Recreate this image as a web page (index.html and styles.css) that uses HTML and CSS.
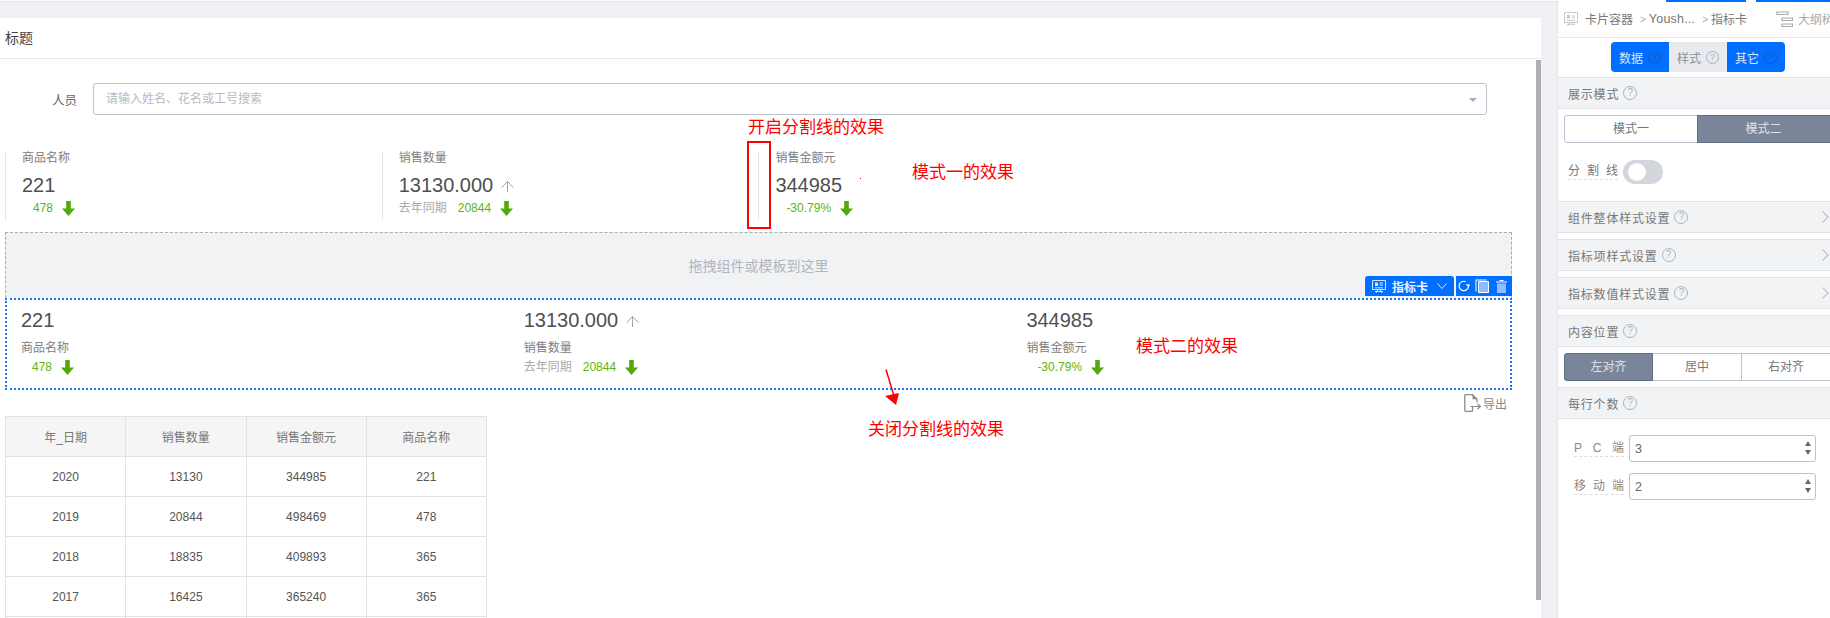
FILE: index.html
```html
<!DOCTYPE html>
<html lang="zh-CN">
<head>
<meta charset="utf-8">
<title>指标卡</title>
<link rel="stylesheet" href="styles.css">
</head>
<body>
<svg class="defs" width="0" height="0" aria-hidden="true">
  <symbol id="down" viewBox="0 0 13 15"><path d="M4.2 0H8.8V7.6H13L6.5 15 0 7.6H4.2Z" fill="#55a80a"/></symbol>
  <symbol id="up" viewBox="0 0 13 11"><path d="M6.5 .5V11M6.5 .5 .7 6.5M6.5 .5 12.3 6.5" fill="none" stroke="#a3a3a3"/></symbol>
</svg>
<main class="main">
  <section class="card">
    <header class="card-title">标题</header>
    <div class="filter">
      <span class="filter-label">人员</span>
      <div class="filter-input"><span>请输入姓名、花名或工号搜索</span><i class="caret"></i></div>
    </div>
    <div class="mode-one">
      <div class="item">
        <div class="label">商品名称</div>
        <div class="value">221</div>
        <div class="sub"><b class="num">478</b><svg class="down"><use href="#down"/></svg></div>
      </div>
      <div class="item">
        <div class="label">销售数量</div>
        <div class="value">13130.000<svg class="up"><use href="#up"/></svg></div>
        <div class="sub"><span class="sub-name">去年同期</span><b class="num">20844</b><svg class="down"><use href="#down"/></svg></div>
      </div>
      <div class="item">
        <div class="label">销售金额元</div>
        <div class="value">344985</div>
        <div class="sub"><b class="num">-30.79%</b><svg class="down"><use href="#down"/></svg></div>
      </div>
    </div>
    <div class="dropzone">拖拽组件或模板到这里</div>
    <div class="mode-two">
      <div class="toolbar">
        <div class="tool-name">
          <svg class="tool-board" viewBox="0 0 14 15"><path d="M.5 1.5H13.5V10.5H.5ZM4 14 6 10.5M10 14 8 10.5M3 12.5H11" fill="none" stroke="#d5e5ff"/><path d="M3 3.5H6V7H3Z" fill="#d5e5ff"/><path d="M7.5 4H11M7.5 6H11M3 8.8H11" stroke="#d5e5ff"/></svg>
          <span>指标卡</span>
          <svg class="tool-chevron" viewBox="0 0 10 6"><path d="M.5 .5 5 5.5 9.500 .5" fill="none" stroke="#d5e5ff"/></svg>
        </div>
        <div class="tool-actions">
          <svg class="tool-refresh" viewBox="0 0 12 12"><path d="M10.500 6A4.700 4.700 0 1 1 7.500 1.600" fill="none" stroke="#fff" stroke-width="1.200"/><path d="M7.800 4 12 4.500 10.500 7.500Z" fill="#fff"/></svg>
          <svg class="tool-copy" viewBox="0 0 14 14"><path d="M.5 .5H11.500V1.500H1.500V12.500H.5Z" fill="#fff"/><path d="M3.500 2.500H13.500V13.500H3.500Z" fill="#8fbcff" stroke="#fff"/></svg>
          <svg class="tool-trash" viewBox="0 0 11 13"><path d="M3.500 .5H7.500M0 2H11" stroke="#fff"/><path d="M1 3.500H10V13H1Z" fill="#8fbcff"/></svg>
        </div>
      </div>
      <div class="item2">
        <div class="value">221</div>
        <div class="label">商品名称</div>
        <div class="sub"><b class="num">478</b><svg class="down"><use href="#down"/></svg></div>
      </div>
      <div class="item2">
        <div class="value">13130.000<svg class="up"><use href="#up"/></svg></div>
        <div class="label">销售数量</div>
        <div class="sub"><span class="sub-name">去年同期</span><b class="num">20844</b><svg class="down"><use href="#down"/></svg></div>
      </div>
      <div class="item2">
        <div class="value">344985</div>
        <div class="label">销售金额元</div>
        <div class="sub"><b class="num">-30.79%</b><svg class="down"><use href="#down"/></svg></div>
      </div>
    </div>
    <div class="export">
      <svg class="export-icon" viewBox="0 0 18 18"><path d="M8.500 12.500V16.800A.7.7 0 0 1 8 17.300H1.800A1 1 0 0 1 .8 16.300V1.700A1 1 0 0 1 1.800 .7H8.500L13 5.200V8.500" fill="none" stroke="#8a8a8a" stroke-width="1.300"/><path d="M8.500 .7V5.200H13Z" fill="#8a8a8a"/><path d="M6.500 12.500H16M13.500 10 16.500 12.500 13.500 15" fill="none" stroke="#8a8a8a" stroke-width="1.200"/></svg>
      <span>导出</span>
    </div>
    <table class="table">
      <thead>
        <tr><th>年_日期</th><th>销售数量</th><th>销售金额元</th><th>商品名称</th></tr>
      </thead>
      <tbody>
        <tr><td>2020</td><td>13130</td><td>344985</td><td>221</td></tr>
        <tr><td>2019</td><td>20844</td><td>498469</td><td>478</td></tr>
        <tr><td>2018</td><td>18835</td><td>409893</td><td>365</td></tr>
        <tr><td>2017</td><td>16425</td><td>365240</td><td>365</td></tr>
        <tr><td></td><td></td><td></td><td></td></tr>
      </tbody>
    </table>
    <div class="scrollbar"></div>
  </section>

  <div class="note note-open">开启分割线的效果</div>
  <div class="note-box"></div>
  <i class="note-dot"></i>
  <div class="note note-one">模式一的效果</div>
  <div class="note note-two">模式二的效果</div>
  <svg class="note-arrow" viewBox="0 0 20 40"><path d="M2 .5 10 27" stroke="#f00" stroke-width="1.500" fill="none"/><path d="M1 27 15 24 12 36Z" fill="#f00"/></svg>
  <div class="note note-close">关闭分割线的效果</div>
</main>

<aside class="side">
  <div class="top-tabs"><i class="top-a"></i><i class="top-b"></i></div>
  <nav class="crumbs">
    <svg class="crumb-icon" viewBox="0 0 14 14"><path d="M.5 .5H13.500V10.500H.5ZM4 13.500 6 10.500M10 13.500 8 10.500M3 12.300H11" fill="none" stroke="#c5c9d0"/><path d="M3 3H6V6.500H3ZM7.500 3.500H11V4.500H7.500ZM7.500 5.500H11V6.500H7.500ZM3 8H11V9H3Z" fill="#c5c9d0"/></svg>
    <span class="crumb crumb-first">卡片容器</span><span class="crumb-sep">&gt;</span>
    <span class="crumb crumb-mid">Yoush...</span><span class="crumb-sep">&gt;</span>
    <span class="crumb">指标卡</span>
    <svg class="outline-icon" viewBox="0 0 17 16"><path d="M1 1H12V3.500H1ZM6 7H16.500V9.500H6ZM6 13H16.500V15.500H6Z" fill="none" stroke="#aaa" stroke-width="1.200"/></svg>
    <span class="outline-text">大纲树</span>
  </nav>
  <div class="tabs">
    <div class="tab tab-on">数据<i class="help">?</i></div>
    <div class="tab tab-off">样式<i class="help">?</i></div>
    <div class="tab tab-on">其它<i class="help">?</i></div>
  </div>
  <div class="bar bar-first">展示模式<i class="help">?</i></div>
  <div class="seg seg-two">
    <div class="seg-item">模式一</div>
    <div class="seg-item seg-on">模式二</div>
  </div>
  <div class="switch-row">
    <span class="field-label">分割线</span>
    <span class="switch"><i></i></span>
  </div>
  <div class="bar bar-fold">组件整体样式设置<i class="help">?</i><i class="chevron"></i></div>
  <div class="bar bar-fold">指标项样式设置<i class="help">?</i><i class="chevron"></i></div>
  <div class="bar bar-fold">指标数值样式设置<i class="help">?</i><i class="chevron"></i></div>
  <div class="bar">内容位置<i class="help">?</i></div>
  <div class="seg seg-three">
    <div class="seg-item seg-on">左对齐</div>
    <div class="seg-item">居中</div>
    <div class="seg-item">右对齐</div>
  </div>
  <div class="bar bar-count">每行个数<i class="help">?</i></div>
  <div class="form">
    <div class="form-row">
      <span class="field-label field-wide"><span>P</span><span>C</span><span>端</span></span>
      <div class="number">3<span class="spin"><i class="spin-up"></i><i class="spin-down"></i></span></div>
    </div>
    <div class="form-row">
      <span class="field-label field-wide"><span>移</span><span>动</span><span>端</span></span>
      <div class="number">2<span class="spin"><i class="spin-up"></i><i class="spin-down"></i></span></div>
    </div>
  </div>
</aside>
</body>
</html>
```
FILE: styles.css
```css
* { box-sizing: border-box; }
html, body { margin: 0; height: 618px; overflow: hidden; }
body {
  display: flex;
  font-family: "Liberation Sans", "Noto Sans CJK SC", sans-serif;
  font-size: 12px;
  color: #555;
  background: #fff;
}
i { font-style: normal; }
b { font-weight: normal; }
.defs { position: absolute; }

/* left canvas */
.main {
  position: relative;
  width: 1558px;
  flex: none;
  height: 618px;
  padding-top: 18px;
  background: #f0f1f4;
  border-top: 1px solid #fff;
  box-shadow: inset 0 1px 0 #e3e5e9;
  border-right: 1px solid #e4e6ea;
}
.card {
  position: relative;
  width: 1541px;
  height: 600px;
  margin-top: -1px;
  background: #fff;
  overflow: hidden;
}
.card-title {
  height: 41px;
  padding-left: 5px;
  font-size: 14px;
  line-height: 40px;
  color: #444;
  border-bottom: 1px solid #e8e9ec;
}
.filter {
  display: flex;
  align-items: center;
  margin-top: 24px;
  padding-left: 52px;
}
.filter-label { width: 25px; margin-right: 16px; font-size: 12.500px; color: #666; }
.filter-input {
  position: relative;
  width: 1394px;
  height: 32px;
  padding-left: 12px;
  line-height: 30px;
  color: #b5bac4;
  border: 1px solid #bcc3cf;
  border-radius: 3px;
}
.caret {
  position: absolute;
  right: 9px;
  top: 14px;
  border: 4px solid transparent;
  border-top: 4px solid #a8adb8;
  border-bottom: 0;
}

/* indicators */
.mode-one {
  display: grid;
  grid-template-columns: repeat(3, 376.700px);
  margin: 36px 0 0 5px;
}
.item {
  height: 69px;
  padding-left: 16px;
  border-left: 1px solid #e3e4e7;
}
.label { height: 14px; line-height: 14px; color: #808080; }
.value {
  display: flex;
  align-items: center;
  height: 24px;
  font-size: 20px;
  line-height: 24px;
  color: #505050;
}
.item .value { margin-top: 8px; }
.sub {
  display: flex;
  align-items: center;
  height: 16px;
  line-height: 16px;
}
.item .sub { margin-top: 3px; }
.sub-name { color: #aaa; }
.num { margin-left: 11px; margin-right: 9px; color: #5fb30c; }
.down { width: 13px; height: 15px; }
.up { width: 13px; height: 11px; margin-left: 8px; margin-top: 3px; }

.dropzone {
  width: 1507px;
  height: 66px;
  margin: 12px 0 0 5px;
  font-size: 14px;
  line-height: 66px;
  text-align: center;
  color: #b0b5bf;
  background: #f1f2f4;
  border: 1px dashed #a9adb8;
  border-bottom: 0;
}
.mode-two {
  position: relative;
  display: grid;
  grid-template-columns: 502.700px 502.700px 1fr;
  width: 1507px;
  height: 92px;
  margin-left: 5px;
  padding: 8px 0 0 14px;
  border: 2px dotted #1a73f5;
}
.item2 .label { margin-top: 9px; }
.item2 .sub { margin-top: 4px; }

.toolbar {
  position: absolute;
  right: -2px;
  top: -24px;
  display: flex;
  gap: 2px;
  height: 20px;
  color: #fff;
}
.tool-name, .tool-actions {
  display: flex;
  align-items: center;
  background: #006eff;
}
.tool-name { width: 89px; padding-left: 7px; border-radius: 3px 3px 0 0; }
.tool-name span { margin-left: 6px; font-weight: bold; color: #eaf2ff; }
.tool-actions { width: 56px; padding-left: 2px; }
.tool-board { width: 14px; height: 15px; }
.tool-chevron { width: 10px; height: 6px; margin-left: 9px; }
.tool-refresh { width: 12px; height: 12px; }
.tool-copy { width: 14px; height: 14px; margin-left: 5px; }
.tool-trash { width: 11px; height: 13px; margin-left: 7px; }

.export {
  display: flex;
  align-items: center;
  justify-content: flex-end;
  width: 1507px;
  height: 26px;
  color: #888;
}
.export-icon { width: 18px; height: 18px; margin-right: 1px; }

.table {
  width: 482px;
  margin-left: 5px;
  border-collapse: collapse;
  table-layout: fixed;
  color: #555;
}
.table th, .table td {
  height: 40px;
  padding: 0;
  text-align: center;
  border: 1px solid #e0e2e7;
  font-weight: normal;
}
.table th { color: #777; background: #f5f5f5; }

.scrollbar {
  position: absolute;
  right: 0;
  top: 42px;
  width: 5px;
  height: 540px;
  background: #b0b0b0;
}

/* red annotations */
.note {
  position: absolute;
  font-size: 17px;
  line-height: 20px;
  color: #f00;
  white-space: nowrap;
}
.note-open { left: 748px; top: 117px; }
.note-one { left: 912px; top: 162px; }
.note-two { left: 1136px; top: 336px; }
.note-close { left: 868px; top: 419px; }
.note-box {
  position: absolute;
  left: 747px;
  top: 140px;
  width: 24px;
  height: 88px;
  border: 2px solid #f00;
}
.note-dot {
  position: absolute;
  left: 860px;
  top: 177px;
  width: 1px;
  height: 1px;
  background: #f00;
}
.note-arrow {
  position: absolute;
  left: 884px;
  top: 368px;
  width: 20px;
  height: 40px;
}

/* right panel */
.side {
  flex: none;
  width: 272px;
  height: 618px;
  overflow: hidden;
  color: #777;
}
.top-tabs { position: relative; height: 0; }
.top-a, .top-b { position: absolute; top: 0; height: 2px; background: #006eff; }
.top-a { left: 108px; width: 80px; }
.top-b { left: 198px; width: 74px; }
.crumbs {
  display: flex;
  align-items: center;
  height: 38px;
  padding-left: 6px;
  border-bottom: 1px solid #e6e8eb;
  white-space: nowrap;
  overflow: hidden;
}
.crumb-icon { width: 14px; height: 14px; flex: none; }
.crumb-first { margin-left: 7px; }
.crumb-mid { letter-spacing: .2px; font-size: 12.500px; }
.crumb-sep { margin: 2px 3px 0 7px; font-size: 10px; color: #aaa; }
.outline-icon { width: 17px; height: 16px; margin-left: 29px; flex: none; }
.outline-text { margin-left: 5px; color: #aaa; }

.tabs {
  display: flex;
  width: 174px;
  height: 30px;
  margin: 4px 0 0 53px;
  border-radius: 4px;
  overflow: hidden;
}
.tab {
  display: flex;
  align-items: center;
  justify-content: center;
  gap: 5px;
  width: 58px;
}
.tab-on { color: #dce9ff; background: #006eff; }
.tab-off { color: #8a8f99; background: #e8eaed; }
.tab .help { width: 13px; height: 13px; margin: 0; font-size: 9px; line-height: 11px; }
.tab-on .help { color: #1f58ad; border-color: #1f58ad; }

.help {
  display: inline-block;
  width: 14px;
  height: 14px;
  margin-left: 4px;
  font-size: 10px;
  line-height: 12px;
  text-align: center;
  letter-spacing: 0;
  color: #a9b3c4;
  border: 1px solid #a9b3c4;
  border-radius: 50%;
}
.bar {
  display: flex;
  align-items: center;
  height: 32px;
  padding-left: 10px;
  letter-spacing: .8px;
  color: #777;
  background: #f2f3f5;
  border-top: 1px solid #e0e3e8;
  border-bottom: 1px solid #e0e3e8;
}
.bar-first { margin-top: 5px; }
.bar-fold { position: relative; margin-bottom: 6px; }
.chevron {
  position: absolute;
  right: 3px;
  top: 11px;
  width: 8px;
  height: 8px;
  border-top: 1px solid #b5b9c2;
  border-right: 1px solid #b5b9c2;
  transform: rotate(45deg);
}
.seg {
  display: grid;
  width: 272px;
  height: 28px;
  margin: 6px 0 6px 6px;
  line-height: 26px;
  text-align: center;
  border: 1px solid #bcc3cf;
  border-radius: 3px;
  color: #777;
}
.seg-two { grid-template-columns: 132px 133px 1fr; margin-bottom: 0; }
.seg-three { grid-template-columns: 88px 88px 89px 1fr; }
.seg-three .seg-item + .seg-item + .seg-item { border-left: 1px solid #bcc3cf; }
.seg-on {
  margin: -1px 0;
  height: 28px;
  color: #dfe3ea;
  background: #7a8599;
  border: 1px solid #626e84;
}
.seg-two .seg-on { margin-right: -8px; padding-right: 8px; }
.seg-three .seg-on { margin-left: -1px; border-radius: 3px 0 0 3px; }
.switch-row {
  display: flex;
  align-items: center;
  height: 58px;
  padding-left: 10px;
}
.field-label {
  width: 50px;
  line-height: 15px;
  letter-spacing: 7px;
  border-bottom: 1px dashed #ddd;
  white-space: nowrap;
}
.switch {
  width: 40px;
  height: 24px;
  margin-left: 5px;
  padding: 3px 5px;
  background: #d3d7dd;
  border-radius: 12px;
}
.switch i {
  display: block;
  width: 18px;
  height: 18px;
  background: #fff;
  border-radius: 50%;
}
.form { padding: 16px 14px 0 16px; }
.form-row {
  display: flex;
  align-items: center;
  gap: 5px;
  height: 27px;
  margin-bottom: 11px;
}
.field-wide {
  display: flex;
  justify-content: space-between;
  letter-spacing: 0;
  color: #888;
}
.number {
  position: relative;
  flex: 1;
  height: 27px;
  padding-left: 5px;
  font-size: 12.500px;
  line-height: 27px;
  color: #666;
  border: 1px solid #bcc3cf;
  border-radius: 3px;
}
.spin {
  position: absolute;
  right: 4px;
  top: 5px;
  display: flex;
  flex-direction: column;
  gap: 4px;
}
.spin-up, .spin-down { width: 0; height: 0; border: 3px solid transparent; }
.spin-up { border-top: 0; border-bottom: 5px solid #666; }
.spin-down { border-bottom: 0; border-top: 5px solid #666; }
```
